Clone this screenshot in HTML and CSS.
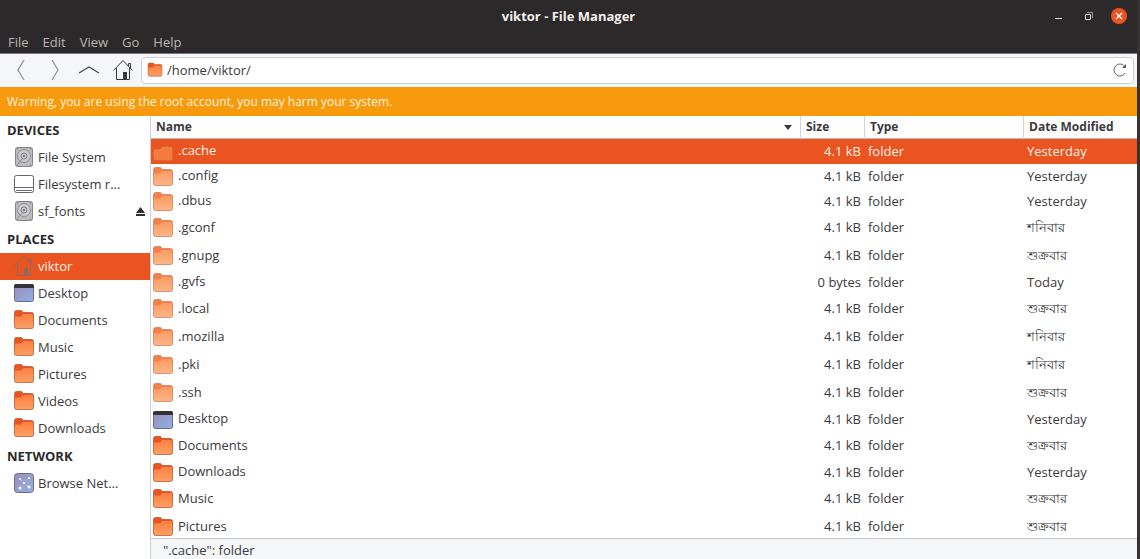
FILE: index.html
```
<!DOCTYPE html>
<html lang="en">
<head>
    <meta charset="utf-8">
    <title>viktor - File Manager</title>
    <link rel="stylesheet" href="styles.css">
</head>
<body>
    <!-- Shared icons -->
    <svg class="sprite" aria-hidden="true">
        <defs>
            <linearGradient id="folderFill" x1="0" y1="0" x2="0" y2="1">
                <stop offset="0" stop-color="#fb7f40"/>
                <stop offset="1" stop-color="#fca064"/>
            </linearGradient>
            <linearGradient id="paleFill" x1="0" y1="0" x2="0" y2="1">
                <stop offset="0" stop-color="#fb9a63"/>
                <stop offset="1" stop-color="#fcb787"/>
            </linearGradient>
            <linearGradient id="deskFill" x1="0" y1="0" x2="1" y2="1">
                <stop offset="0" stop-color="#9c8cb8"/>
                <stop offset="1" stop-color="#8fb2e4"/>
            </linearGradient>
        </defs>
        <symbol id="folder" viewBox="0 0 22 22">
            <path d="M1.5 3.5a2 2 0 0 1 2-2H8q1 0 1.5 1l.5 1h8.5a2 2 0 0 1 2 2V10h-19z" fill="#e95420"/>
            <path d="M1.5 7.5H8l2-2.500h8.500a2 2 0 0 1 2 2v10.500a2 2 0 0 1-2 2h-15a2 2 0 0 1-2-2z" fill="url(#folderFill)"/>
            <path d="M1.5 3.5a2 2 0 0 1 2-2H8q1 0 1.5 1l.5 1h8.5a2 2 0 0 1 2 2v12a2 2 0 0 1-2 2h-15a2 2 0 0 1-2-2z" fill="none" stroke="#b5532e" stroke-opacity=".75"/>
        </symbol>
        <symbol id="folder-pale" viewBox="0 0 22 22">
            <path d="M1.5 3.5a2 2 0 0 1 2-2H8q1 0 1.5 1l.5 1h8.5a2 2 0 0 1 2 2V10h-19z" fill="#f5804c"/>
            <path d="M1.5 7.5H8l2-2.500h8.500a2 2 0 0 1 2 2v10.500a2 2 0 0 1-2 2h-15a2 2 0 0 1-2-2z" fill="url(#paleFill)"/>
            <path d="M1.5 3.5a2 2 0 0 1 2-2H8q1 0 1.5 1l.5 1h8.5a2 2 0 0 1 2 2v12a2 2 0 0 1-2 2h-15a2 2 0 0 1-2-2z" fill="none" stroke="#cf7f5c" stroke-opacity=".8"/>
        </symbol>
        <symbol id="folder-selected" viewBox="0 0 22 22">
            <path d="M1.5 8H8l2-2.500h8.500a2 2 0 0 1 2 2v10a2 2 0 0 1-2 2h-15a2 2 0 0 1-2-2z" fill="#f47a3e" stroke="#c2643d" stroke-dasharray="1 1"/>
        </symbol>
        <symbol id="desktop" viewBox="0 0 22 22">
            <rect x="1.5" y="2.5" width="19" height="17" rx="2" fill="url(#deskFill)" stroke="#6f6a8c"/>
            <path d="M1 6V4a2 2 0 0 1 2-2h16a2 2 0 0 1 2 2v2z" fill="#35323a"/>
        </symbol>
        <symbol id="disk" viewBox="0 0 22 22">
            <rect x="2.5" y="1.5" width="17" height="19" rx="2" fill="#bdbdc1" stroke="#85848a"/>
            <circle cx="11" cy="10" r="6.5" fill="#cbcbcf" stroke="#8b8b92"/>
            <circle cx="11" cy="10" r="3" fill="none" stroke="#808087"/>
            <circle cx="11" cy="10" r="1" fill="#66666b"/>
            <path d="M5 18l5-6" stroke="#8b8b92"/>
            <path d="M4 3h1M17 3h1M4 19h1M17 19h1" stroke="#66666b"/>
        </symbol>
        <symbol id="drive" viewBox="0 0 22 22">
            <rect x="1.5" y="2.5" width="19" height="17" rx="2" fill="#fff" stroke="#66646e"/>
            <path d="M2 14.5h18M3 17.5h16" stroke="#66646e"/>
        </symbol>
        <symbol id="home" viewBox="0 0 22 22">
            <path d="M1.5 11.5L11 1.5l9.5 10M4.5 9v11.5h13V9M16.5 7V4.5h2v4.500" fill="none" stroke="currentColor"/>
            <path d="M11 20v-7h4v7z" fill="currentColor"/>
        </symbol>
        <symbol id="network" viewBox="0 0 22 22">
            <rect x="1.5" y="1.5" width="19" height="19" rx="3" fill="url(#deskFill)" stroke="#6f6a8c"/>
            <path d="M7 7l4 4 5-5M11 11l-4 5M11 11l5 4" stroke="#c5cdec" fill="none" stroke-dasharray="1 1"/>
            <g fill="#fff"><circle cx="7" cy="7" r="1"/><circle cx="16" cy="6" r="1"/><circle cx="11" cy="11" r="1"/><circle cx="7" cy="16" r="1.5"/><circle cx="16" cy="15" r="1.5"/></g>
        </symbol>
    </svg>

    <div class="window">
        <header class="titlebar">
            <h1>viktor - File Manager</h1>
            <div class="window-buttons">
                <button aria-label="Minimize"><svg width="10" height="10"><path d="M1 7.5h7" stroke="#ddd"/></svg></button>
                <button aria-label="Restore"><svg width="10" height="10" fill="none" stroke="#ddd"><path d="M1.5 3.5h5v5h-5z"/><path d="M3 1.5h5.5V7" opacity=".6"/></svg></button>
                <button class="close" aria-label="Close"><svg width="10" height="10"><path d="M2 2l6 6M8 2l-6 6" stroke="#fff" stroke-width="1.3"/></svg></button>
            </div>
        </header>
        <nav class="menubar">
            <button>File</button>
            <button>Edit</button>
            <button>View</button>
            <button>Go</button>
            <button>Help</button>
        </nav>

        <div class="toolbar">
            <button aria-label="Back"><svg width="22" height="22"><path d="M14 1L8 11l6 10" fill="none" stroke="#96949c" stroke-width="1.3"/></svg></button>
            <button aria-label="Forward"><svg width="22" height="22"><path d="M8 1l6 10-6 10" fill="none" stroke="#96949c" stroke-width="1.3"/></svg></button>
            <button aria-label="Up"><svg width="22" height="22"><path d="M1 14l10-6 10 6" fill="none" stroke="#4b474c" stroke-width="1.3"/></svg></button>
            <button aria-label="Home"><svg width="22" height="22"><use href="#home"/></svg></button>
            <div class="location">
                <svg width="16" height="16"><use href="#folder"/></svg>
                <input type="text" value="/home/viktor/" aria-label="Location">
                <button aria-label="Reload"><svg width="16" height="16"><path d="M12.5 4a6 6 0 1 0 .7 7" fill="none" stroke="#6b676e"/><path d="M14 2v4h-4z" fill="#5b575e"/></svg></button>
            </div>
        </div>

        <p class="warning">Warning, you are using the root account, you may harm your system.</p>

        <div class="panes">
            <aside class="sidebar">
                <h2>DEVICES</h2>
                <a href="#"><svg><use href="#disk"/></svg><span>File System</span></a>
                <a href="#"><svg><use href="#drive"/></svg><span>Filesystem r…</span></a>
                <div class="mount">
                    <a href="#"><svg><use href="#disk"/></svg><span>sf_fonts</span></a>
                    <button aria-label="Eject"><svg width="9" height="9"><path d="M4.5 0L9 6H0zM0 7h9v2H0z" fill="#2f2b2e"/></svg></button>
                </div>
                <h2>PLACES</h2>
                <a href="#" class="selected"><svg><use href="#home"/></svg><span>viktor</span></a>
                <a href="#"><svg><use href="#desktop"/></svg><span>Desktop</span></a>
                <a href="#"><svg><use href="#folder"/></svg><span>Documents</span></a>
                <a href="#"><svg><use href="#folder"/></svg><span>Music</span></a>
                <a href="#"><svg><use href="#folder"/></svg><span>Pictures</span></a>
                <a href="#"><svg><use href="#folder"/></svg><span>Videos</span></a>
                <a href="#"><svg><use href="#folder"/></svg><span>Downloads</span></a>
                <h2>NETWORK</h2>
                <a href="#"><svg><use href="#network"/></svg><span>Browse Net…</span></a>
            </aside>

            <main class="content">
                <div class="list">
                    <table>
                        <thead>
                            <tr>
                                <th class="name"><span class="sort">Name <svg width="8" height="5"><path d="M0 0h8L4 5z" fill="#3c393d"/></svg></span></th>
                                <th class="size">Size</th>
                                <th class="type">Type</th>
                                <th class="date">Date Modified</th>
                            </tr>
                        </thead>
                        <tbody>
                            <tr class="selected"><td><svg><use href="#folder-selected"/></svg>.cache</td><td>4.1 kB</td><td>folder</td><td>Yesterday</td></tr>
                            <tr><td><svg><use href="#folder-pale"/></svg>.config</td><td>4.1 kB</td><td>folder</td><td>Yesterday</td></tr>
                            <tr><td><svg><use href="#folder-pale"/></svg>.dbus</td><td>4.1 kB</td><td>folder</td><td>Yesterday</td></tr>
                            <tr class="tall"><td><svg><use href="#folder-pale"/></svg>.gconf</td><td>4.1 kB</td><td>folder</td><td lang="bn">শনিবার</td></tr>
                            <tr class="tall"><td><svg><use href="#folder-pale"/></svg>.gnupg</td><td>4.1 kB</td><td>folder</td><td lang="bn">শুক্রবার</td></tr>
                            <tr><td><svg><use href="#folder-pale"/></svg>.gvfs</td><td>0 bytes</td><td>folder</td><td>Today</td></tr>
                            <tr class="tall"><td><svg><use href="#folder-pale"/></svg>.local</td><td>4.1 kB</td><td>folder</td><td lang="bn">শুক্রবার</td></tr>
                            <tr class="tall"><td><svg><use href="#folder-pale"/></svg>.mozilla</td><td>4.1 kB</td><td>folder</td><td lang="bn">শনিবার</td></tr>
                            <tr class="tall"><td><svg><use href="#folder-pale"/></svg>.pki</td><td>4.1 kB</td><td>folder</td><td lang="bn">শনিবার</td></tr>
                            <tr class="tall"><td><svg><use href="#folder-pale"/></svg>.ssh</td><td>4.1 kB</td><td>folder</td><td lang="bn">শুক্রবার</td></tr>
                            <tr><td><svg><use href="#desktop"/></svg>Desktop</td><td>4.1 kB</td><td>folder</td><td>Yesterday</td></tr>
                            <tr class="tall"><td><svg><use href="#folder"/></svg>Documents</td><td>4.1 kB</td><td>folder</td><td lang="bn">শুক্রবার</td></tr>
                            <tr><td><svg><use href="#folder"/></svg>Downloads</td><td>4.1 kB</td><td>folder</td><td>Yesterday</td></tr>
                            <tr class="tall"><td><svg><use href="#folder"/></svg>Music</td><td>4.1 kB</td><td>folder</td><td lang="bn">শুক্রবার</td></tr>
                            <tr class="tall"><td><svg><use href="#folder"/></svg>Pictures</td><td>4.1 kB</td><td>folder</td><td lang="bn">শুক্রবার</td></tr>
                        </tbody>
                    </table>
                </div>
                <footer class="statusbar">".cache": folder</footer>
            </main>
        </div>
    </div>
</body>
</html>
```

FILE: styles.css
```
* {
    box-sizing: border-box;
}
body {
    margin: 0;
    font-family: "Open Sans", "Noto Sans", sans-serif;
    font-size: 13px;
    line-height: 18px;
    color: #3c393d;
    background-color: #343233;
}
button {
    display: flex;
    align-items: center;
    justify-content: center;
    padding: 0;
    border: 0;
    background: none;
    font: inherit;
    color: inherit;
}
a {
    color: inherit;
    text-decoration: none;
}
.sprite {
    position: absolute;
    width: 0;
    height: 0;
}
.window {
    display: flex;
    flex-direction: column;
    height: 100vh;
    margin-right: 3px;
}
/* Title and menus */
.titlebar {
    display: grid;
    grid-template-columns: 1fr auto 1fr;
    align-items: center;
    height: 32px;
    background-color: #2b292a;
    color: #f3f1f0;
}
.titlebar h1 {
    grid-column: 2;
    margin: 0;
    font-size: 13px;
}
.window-buttons {
    display: flex;
    justify-content: flex-end;
    gap: 14px;
    padding-right: 10px;
}
.window-buttons button {
    width: 16px;
    height: 16px;
    border-radius: 50%;
}
.window-buttons .close {
    background-color: #e95420;
}
.menubar {
    display: flex;
    gap: 14px;
    height: 21px;
    padding: 0 8px 2px;
    background-color: #2b292a;
    color: #b9b5b4;
}
/* Toolbar */
.toolbar {
    display: flex;
    align-items: center;
    gap: 12px;
    height: 34px;
    padding: 0 3px 1px 10px;
    border-top: 1px solid #77757a;
    background-color: #f5f6f7;
}
.location {
    display: flex;
    flex: 1;
    align-items: center;
    gap: 4px;
    height: 27px;
    margin-left: -5px;
    padding: 0 5px;
    border: 1px solid #cdd1d6;
    border-radius: 4px;
    background-color: #fff;
}
.location input {
    flex: 1;
    min-width: 0;
    padding: 0;
    border: 0;
    outline: 0;
    font: inherit;
    color: inherit;
}
.warning {
    height: 29px;
    margin: 0;
    padding: 6px 7px;
    font-size: 12px;
    background-color: #f79a0e;
    color: #fff3dc;
}
/* Side pane */
.panes {
    display: flex;
    flex: 1;
    min-height: 0;
}
.sidebar {
    width: 150px;
    background-color: #fff;
}
.sidebar h2 {
    margin: 0;
    padding-left: 7px;
    font-size: 13px;
    line-height: 28px;
    color: #2b292c;
}
.sidebar a {
    display: flex;
    align-items: center;
    gap: 3px;
    height: 27px;
    padding: 0 0 2px 13px;
}
.sidebar a svg {
    width: 22px;
    height: 22px;
}
.sidebar .selected {
    background-color: #e95420;
    color: #fff0e6;
}
.sidebar .selected svg {
    color: #8a6a62;
}
.mount {
    display: flex;
    justify-content: space-between;
    padding-right: 5px;
}
/* File list */
.content {
    display: flex;
    flex: 1;
    flex-direction: column;
    min-width: 0;
    border-left: 1px solid #cdd1d6;
    background-color: #fff;
}
.list {
    flex: 1;
    min-height: 0;
    overflow: hidden;
}
table {
    width: 100%;
    table-layout: fixed;
    border-collapse: separate;
    border-spacing: 0;
}
th {
    height: 23px;
    padding: 0 5px;
    border-bottom: 1px solid #b9b9bc;
    border-left: 1px solid #d3d5d8;
    font-size: 12px;
    text-align: left;
}
th.name {
    border-left: 0;
}
th.size {
    width: 64px;
}
th.type {
    width: 159px;
}
th.date {
    width: 114px;
}
.sort {
    display: flex;
    align-items: center;
    justify-content: space-between;
    padding-right: 3px;
}
td {
    height: 25px;
    padding: 0 4px 2px;
    white-space: nowrap;
}
.tall td {
    height: 28px;
}
td:first-child {
    padding-left: 1px;
}
td:nth-child(2) {
    padding-right: 3px;
    text-align: right;
}
td svg {
    width: 22px;
    height: 22px;
    margin: -3px 4px -3px 0;
    vertical-align: middle;
}
tr.selected td {
    background-color: #e95420;
    color: #fff0e6;
}
.statusbar {
    height: 21px;
    padding: 2px 12px;
    border-top: 1px solid #c5c7ca;
    background-color: #f5f6f7;
}
```
